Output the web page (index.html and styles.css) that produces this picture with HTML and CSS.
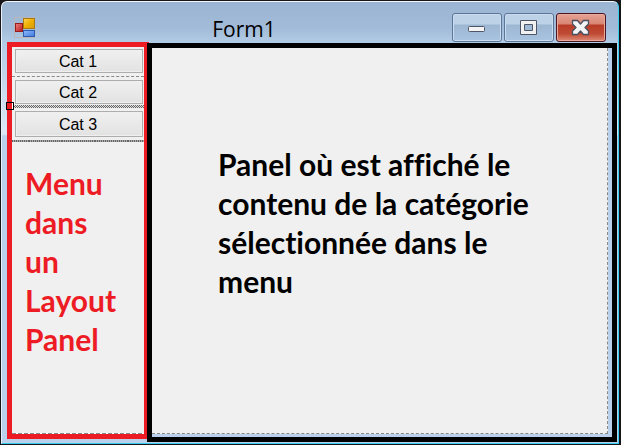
FILE: index.html
```
<!DOCTYPE html>
<html lang="fr">
<head>
<meta charset="utf-8">
<title>Form1</title>
<link rel="stylesheet" href="styles.css">
</head>
<body>
<div class="window">
  <header class="titlebar">
    <svg class="app-icon" viewBox="0 0 22 21" shape-rendering="crispEdges" aria-hidden="true">
      <defs>
        <linearGradient id="gold" x2="1" y2="1"><stop offset="0" stop-color="#ffd45a"/><stop offset=".5" stop-color="#efb000"/><stop offset="1" stop-color="#d39a10"/></linearGradient>
        <linearGradient id="red" x2="1" y2="1"><stop offset="0" stop-color="#f08080"/><stop offset="1" stop-color="#b81818"/></linearGradient>
        <linearGradient id="blue" x2="1" y2="1"><stop offset="0" stop-color="#8fbcff"/><stop offset="1" stop-color="#3f78dc"/></linearGradient>
      </defs>
      <path d="M.5.5h20v20H.5zM9 .5v20M.5 14.5h20M.5 6h9" fill="none" stroke="#b9b5b8"/>
      <rect x="9.500" y="1.500" width="11" height="10" fill="url(#gold)" stroke="#a97a12"/>
      <rect x="1.500" y="6.500" width="7" height="8" fill="url(#red)" stroke="#981b1b"/>
      <rect x="9.500" y="13.500" width="11" height="6" fill="url(#blue)" stroke="#2d5cae"/>
    </svg>
    <h1 class="title">Form1</h1>
    <div class="controls">
      <button class="control" type="button" aria-label="Réduire">
        <svg viewBox="0 0 50 29"><rect x="16.500" y="13.500" width="16" height="5" rx="1" fill="#f4f4f4" stroke="#4d5666"/></svg>
      </button>
      <button class="control" type="button" aria-label="Agrandir">
        <svg viewBox="0 0 50 29"><path fill="#f1f1f1" fill-rule="evenodd" stroke="#4d5666" d="M16.500 7.500h16v14h-16zM20.500 11.500v6h8v-6z"/></svg>
      </button>
      <button class="control close" type="button" aria-label="Fermer">
        <svg viewBox="0 0 50 29"><path fill="#f4f4f4" stroke="#4b5060" stroke-width="1.300" stroke-linejoin="round" d="M16.500 7.500h5l3 3.500 3-3.500h5v3.500L29 14.500l3.500 3.500v3.500h-5l-3-3.500-3 3.500h-5V18l3.500-3.500-3.500-3.500z"/></svg>
      </button>
    </div>
  </header>
  <main class="client">
    <nav class="menu">
      <div class="row"><button class="category" type="button">Cat 1</button></div>
      <div class="row row-selected"><span class="handle"></span><button class="category" type="button">Cat 2</button></div>
      <div class="row row-last"><button class="category" type="button">Cat 3</button></div>
      <p class="note note-menu">Menu<br>dans<br>un<br>Layout<br>Panel</p>
    </nav>
    <section class="content">
      <div class="panel">
        <p class="note note-panel">Panel où est affiché le contenu de la catégorie sélectionnée dans le menu</p>
      </div>
    </section>
  </main>
</div>
</body>
</html>
```
FILE: styles.css
```
* {
  box-sizing: border-box;
}

body {
  margin: 0;
  height: 100vh;
  padding: 1px 2px 1px 1px;
  background: #17151a;
}

.window {
  display: flex;
  flex-direction: column;
  height: 100%;
  padding: 0 1px 1px 5px;
  border: 1px solid #35cdf0;
  border-top-color: #f4f8fc;
  border-left-color: #e8f2fb;
  border-radius: 6px 6px 0 0;
  background: linear-gradient(#9ab4d3 0, #a1bbd8 26px, #b3cce6 41px, #dde8f5 132px, #b9d1ea 134px);
}

.titlebar {
  display: flex;
  flex: none;
  align-items: center;
  height: 40px;
  padding: 10px 11px 0 7px;
}

.app-icon {
  flex: none;
  width: 22px;
  height: 21px;
}

.title {
  flex: 1;
  margin: 0;
  padding-top: 3px;
  text-align: center;
  font: 400 21px/28px "Open Sans", "Noto Sans", sans-serif;
  color: #000;
}

.controls {
  display: flex;
  gap: 2px;
}

.control {
  width: 50px;
  height: 29px;
  padding: 0;
  border: 1px solid #5d7597;
  border-radius: 3px;
  background: linear-gradient(#bdd1e7 0 10px, #9db7d3 11px, #a9c4e0);
  box-shadow: inset 0 0 0 1px #c9dcf0;
}

.control svg {
  display: block;
  width: 50px;
  height: 29px;
  margin: -1px;
}

.close {
  border-color: #4c1523;
  background: linear-gradient(#e5a294 0, #d98674 10px, #b83c26 11px, #c04c35 20px, #dd8c78);
  box-shadow: inset 0 0 0 1px #e9aa9c;
}

.client {
  display: flex;
  flex: 1;
  min-height: 0;
}

.menu {
  flex: none;
  width: 142px;
  margin-bottom: 3px;
  border: 5px solid #ed1c24;
  background: linear-gradient(90deg, #888 70%, #fff 0) 0 100% / 6px 1px repeat-x #f0f0f0;
}

.row {
  position: relative;
  height: 30px;
  padding: 2px 1px 0 3px;
  border-bottom: 1px dashed #888;
}

.row-selected {
  height: 32px;
  padding-top: 3px;
  border-bottom: 0;
}

.row-selected::after {
  content: "";
  display: block;
  height: 3px;
  margin: 1px -1px 0 -3px;
  background: repeating-conic-gradient(#666 0 25%, #ddd 0 50%) 0 0 / 2px 2px;
}

.row-last {
  height: 33px;
  border-bottom: 2px solid #777;
  border-image: repeating-linear-gradient(90deg, #666 0 1px, #aaa 1px 2px) 2;
}

.category {
  display: block;
  width: 100%;
  height: 24px;
  padding: 2px 2px 0 0;
  border: 1px solid #adadad;
  background: linear-gradient(#f0f0f0, #e2e2e2);
  box-shadow: inset 0 0 0 1px #efefef;
  font: 16px/18px "Liberation Sans", Arial, sans-serif;
  color: #000;
}

.row-last .category {
  height: 26px;
}

.handle {
  position: absolute;
  bottom: -1px;
  left: -6px;
  width: 8px;
  height: 8px;
  border: 1px solid #000;
  background: linear-gradient(90deg, #ed1c24 5px, #fff 0);
}

.note {
  margin: 0;
  font: 700 30px/39px Lato, "Open Sans", sans-serif;
  font-variant-ligatures: none;
}

.note-menu {
  padding: 22px 0 0 13px;
  color: #ed1c24;
}

.content {
  flex: 1;
  min-width: 0;
  margin: 1px 0 0 -2px;
  padding: 0 4px 3px 0;
  border: 5px solid #000;
  background: #b9d1ea;
}

.panel {
  height: 100%;
  padding: 97px 64px 0 66px;
  border: 1px dashed #888;
  border-width: 0 1px 1px 0;
  background: #f0f0f0;
}

.note-panel {
  color: #000;
}
```
